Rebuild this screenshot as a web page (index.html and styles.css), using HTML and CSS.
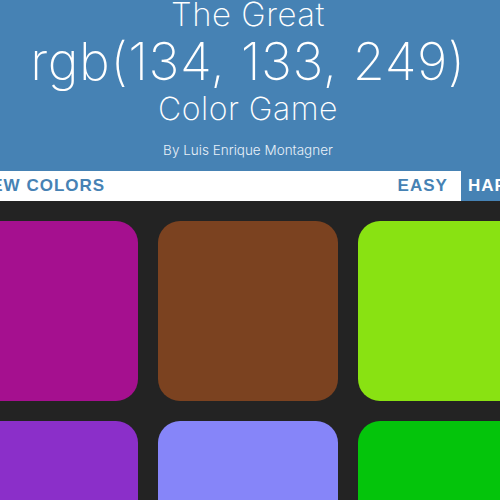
FILE: index.html
```html
<!DOCTYPE html>
<html lang="en">
<head>
<meta charset="utf-8">
<title>The Great Color Game</title>
<link rel="stylesheet" href="styles.css">
</head>
<body>
<div class="page">
  <header class="header">
    <h1 class="title">
      <span class="title-small">The Great</span>
      <span class="title-rgb">rgb(134, 133, 249)</span>
      <span class="title-game">Color Game</span>
    </h1>
    <p class="byline">By Luis Enrique Montagner</p>
  </header>
  <nav class="stripe">
    <div class="stripe-inner">
      <button class="btn btn-new">New Colors</button>
      <div class="modes">
        <button class="btn">Easy</button>
        <button class="btn selected">Hard</button>
      </div>
    </div>
  </nav>
  <main class="board">
    <div class="grid">
      <div class="square sq-1"></div>
      <div class="square sq-2"></div>
      <div class="square sq-3"></div>
      <div class="square sq-4"></div>
      <div class="square sq-5"></div>
      <div class="square sq-6"></div>
    </div>
  </main>
</div>
</body>
</html>
```
FILE: styles.css
```css
html, body {
  margin: 0;
  padding: 0;
  overflow: hidden;
  background: #232323;
}

.page {
  width: 500px;
}

.header {
  background: #4682b4;
  color: #ffffff;
  text-align: center;
  padding: 0 4px 11px 0;
  font-family: "Inter", "Open Sans", sans-serif;
  font-weight: 250;
}

.title {
  margin: 0;
  font-weight: 250;
}

.title span {
  display: block;
  white-space: nowrap;
}

.title-small {
  font-size: 33px;
  line-height: 29px;
  letter-spacing: 0.5px;
}

.title-rgb {
  font-size: 52px;
  line-height: 66px;
  letter-spacing: 0.55px;
}

.title-game {
  font-size: 32px;
  line-height: 27px;
  letter-spacing: 0.5px;
}

.byline {
  margin: 18px 0 0;
  font-size: 13.5px;
  font-weight: 300;
  line-height: 20px;
  color: #e8f0f8;
}

.stripe {
  background: #ffffff;
  height: 30px;
  display: flex;
  justify-content: center;
  padding-right: 4px;
}

.stripe-inner {
  flex: 0 0 600px;
  width: 600px;
  box-sizing: border-box;
  padding-right: 20px;
  display: flex;
  justify-content: space-between;
  align-items: stretch;
}

.modes {
  display: flex;
  gap: 6px;
}

.btn {
  border: none;
  background: none;
  margin: 0;
  padding: 0 7px;
  height: 30px;
  font-family: "Liberation Sans", Arial, sans-serif;
  font-weight: 700;
  font-size: 17px;
  letter-spacing: 1px;
  text-transform: uppercase;
  color: #4682b4;
  line-height: 30px;
}

.btn-new {
  padding-left: 30px;
}

.btn.selected {
  background: #4682b4;
  color: #ffffff;
}

.board {
  display: flex;
  justify-content: center;
  padding-right: 4px;
}

.grid {
  flex: 0 0 600px;
  width: 600px;
  box-sizing: border-box;
  padding: 20px 10px;
  display: grid;
  grid-template-columns: repeat(3, 180px);
  grid-auto-rows: 180px;
  gap: 20px;
}

.square {
  border-radius: 22px;
}

.sq-1 { background: #a5108f; }
.sq-2 { background: #7b4220; }
.sq-3 { background: #89e212; }
.sq-4 { background: #8b2fc9; }
.sq-5 { background: #8685f9; }
.sq-6 { background: #04c40b; }
```
